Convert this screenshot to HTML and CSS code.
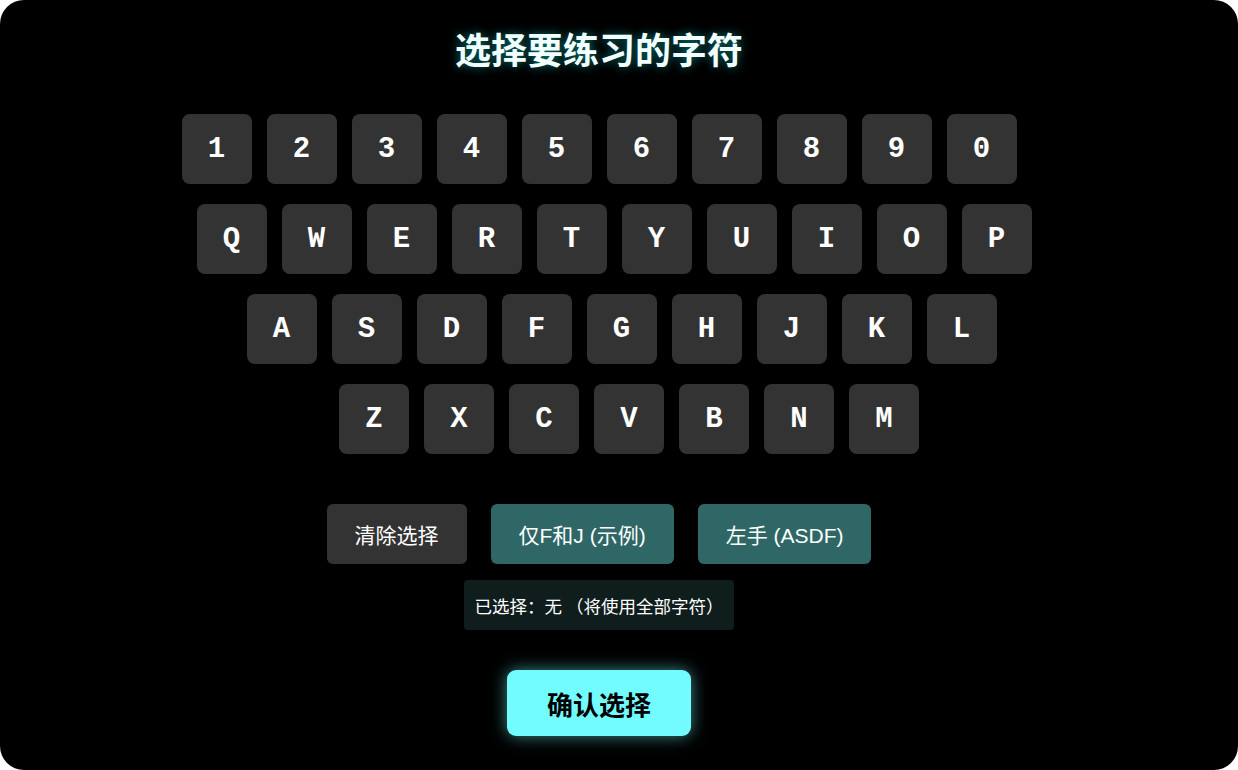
FILE: index.html
```html
<!DOCTYPE html>
<html lang="zh-CN">
<head>
<meta charset="utf-8">
<title>选择要练习的字符</title>
<link rel="stylesheet" href="styles.css">
</head>
<body>
<div class="app">
  <div class="content">
    <h1 class="title">选择要练习的字符</h1>
    <div class="keyboard">
      <div class="row row-1">
        <div class="key">1</div><div class="key">2</div><div class="key">3</div><div class="key">4</div><div class="key">5</div><div class="key">6</div><div class="key">7</div><div class="key">8</div><div class="key">9</div><div class="key">0</div>
      </div>
      <div class="row row-2">
        <div class="key">Q</div><div class="key">W</div><div class="key">E</div><div class="key">R</div><div class="key">T</div><div class="key">Y</div><div class="key">U</div><div class="key">I</div><div class="key">O</div><div class="key">P</div>
      </div>
      <div class="row row-3">
        <div class="key">A</div><div class="key">S</div><div class="key">D</div><div class="key">F</div><div class="key">G</div><div class="key">H</div><div class="key">J</div><div class="key">K</div><div class="key">L</div>
      </div>
      <div class="row row-4">
        <div class="key">Z</div><div class="key">X</div><div class="key">C</div><div class="key">V</div><div class="key">B</div><div class="key">N</div><div class="key">M</div>
      </div>
    </div>
    <div class="actions">
      <button class="btn btn-dark">清除选择</button>
      <button class="btn btn-teal">仅F和J (示例)</button>
      <button class="btn btn-teal">左手 (ASDF)</button>
    </div>
    <div class="status">已选择：无 （将使用全部字符）</div>
    <button class="confirm">确认选择</button>
  </div>
</div>
</body>
</html>
```
FILE: styles.css
```css
* { box-sizing: border-box; }
html, body {
  margin: 0;
  padding: 0;
  background: #ffffff;
}
.app {
  width: 1238px;
  height: 770px;
  background: #000;
  border-radius: 24px;
  overflow: hidden;
  font-family: "Liberation Sans", "Noto Sans CJK SC", sans-serif;
  color: #fff;
}
.content {
  width: 1198px;
  display: flex;
  flex-direction: column;
  align-items: center;
}
.title {
  margin: 26px 0 0;
  height: 44px;
  line-height: 44px;
  font-size: 36px;
  font-weight: 700;
  font-family: "Noto Sans CJK SC", sans-serif;
  color: #f4ffff;
  text-shadow: 0 0 10px rgba(0, 255, 255, 0.45);
}
.keyboard {
  margin-top: 44px;
  display: flex;
  flex-direction: column;
  align-items: center;
  gap: 20px;
}
.row {
  display: flex;
  gap: 15px;
}
.row-2 { margin-left: 30px; }
.row-3 { margin-left: 45px; }
.row-4 { margin-left: 60px; }
.key {
  width: 70px;
  height: 70px;
  border-radius: 8px;
  background: #333333;
  display: flex;
  align-items: center;
  justify-content: center;
  font-family: "Liberation Mono", "Courier New", monospace;
  font-weight: 700;
  font-size: 29px;
  color: #fff;
}
.actions {
  margin-top: 50px;
  display: flex;
  gap: 24px;
}
.btn {
  height: 60px;
  padding: 0 28px;
  border: none;
  border-radius: 6px;
  font-family: "Liberation Sans", "Noto Sans CJK SC", sans-serif;
  font-size: 21px;
  color: #fff;
  display: flex;
  align-items: center;
}
.btn-dark { background: #333333; }
.btn-teal { background: #2e6766; }
.status {
  margin-top: 16px;
  height: 50px;
  padding: 0 11px;
  display: flex;
  align-items: center;
  background: #0f1d1d;
  border-radius: 4px;
  font-family: "Noto Sans CJK SC", sans-serif;
  font-size: 17.5px;
  color: #fff;
}
.confirm {
  margin-top: 40px;
  width: 184px;
  height: 66px;
  border: none;
  border-radius: 9px;
  background: #72fcff;
  color: #000;
  font-family: "Noto Sans CJK SC", sans-serif;
  font-weight: 700;
  font-size: 26px;
  box-shadow: 0 0 16px rgba(114, 252, 255, 0.55);
}
```
